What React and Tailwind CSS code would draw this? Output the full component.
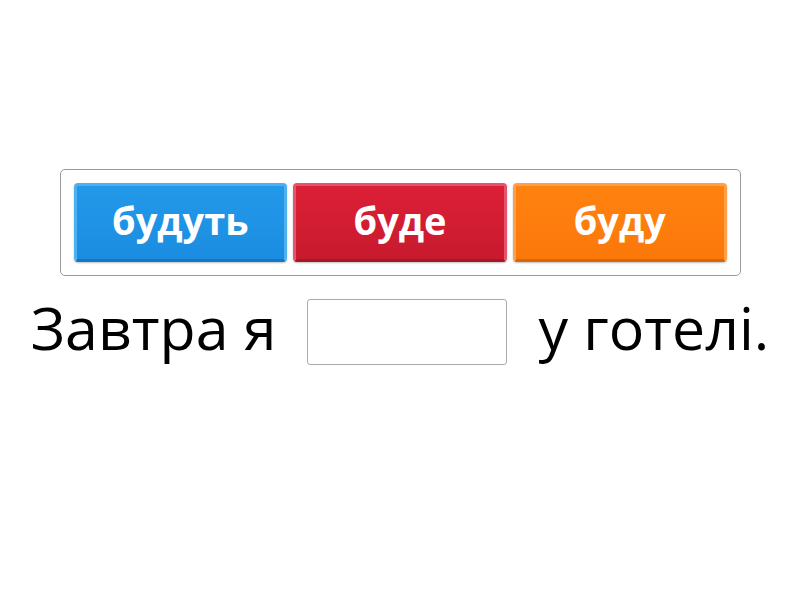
import React from "react";

const options = [
  {
    label: "будуть",
    face: "bg-gradient-to-b from-[#2399ea] to-[#1b8de0]",
    rim: "border-[#4fb0f0] border-b-[#1477c4]",
  },
  {
    label: "буде",
    face: "bg-gradient-to-b from-[#dc1f36] to-[#c81a2e]",
    rim: "border-[#e4546a] border-b-[#a8162a]",
  },
  {
    label: "буду",
    face: "bg-gradient-to-b from-[#ff8210] to-[#fb780a]",
    rim: "border-[#ff9f4a] border-b-[#d9670a]",
  },
];

const App = () => {
  return (
    <div
      className="w-[800px] h-[600px] bg-white flex flex-col items-center pt-[169px]"
      style={{ fontFamily: '"Open Sans", "Noto Sans", sans-serif' }}
    >
      {/* Answer choices */}
      <div className="w-[681px] h-[107px] border border-[#9a9a9a] rounded-[5px] flex items-center gap-[6px] px-[13px]">
        {options.map((o) => (
          <div
            key={o.label}
            className={`w-[214px] h-[79px] rounded-[4px] border-[3px] ${o.rim} ${o.face} shadow-[0_1px_2px_rgba(0,0,0,0.25)] flex items-center justify-center`}
          >
            <span className="text-white font-bold text-[38px] leading-none -mt-[6px]">{o.label}</span>
          </div>
        ))}
      </div>

      {/* Sentence */}
      <div className="flex items-center mt-[23px] text-black text-[59px] leading-none">
        <span className="-mt-[10px]">Завтра я</span>
        <div className="w-[200px] h-[66px] border border-[#aaaaaa] rounded-[3px] mx-[31px]" />
        <span className="-mt-[10px]">у готелі.</span>
      </div>
    </div>
  );
};

export default App;
